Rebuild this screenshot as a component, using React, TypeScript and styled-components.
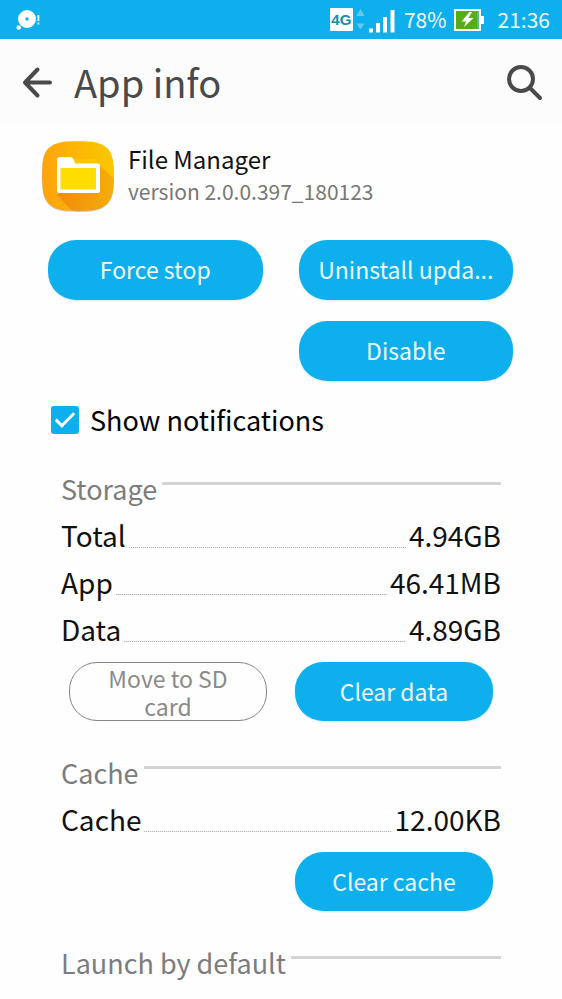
import React from "react";
import styled, { createGlobalStyle } from "styled-components";

const GlobalStyle = createGlobalStyle`
  *, *::before, *::after { box-sizing: border-box; }
  body {
    margin: 0;
    background: #fefefe;
    color: #111;
    font-family: "Noto Sans CJK SC", "Noto Sans", sans-serif;
    font-size: 27px;
  }
  button, input { font: inherit; }
`;

const Page = styled.div`
  min-height: 100vh;
`;

const StatusBar = styled.div`
  display: flex;
  align-items: center;
  justify-content: space-between;
  height: 39px;
  padding: 0 12px 0 16px;
  background: #0dafed;
  color: #f2fbff;
  font-size: 21px;
  line-height: 39px;
`;

const StatusGroup = styled.div`
  display: flex;
  align-items: center;
`;

const Charge = styled.span`
  display: flex;
  align-items: center;
  gap: 7px;
  margin-right: 14px;
`;

const AppBar = styled.header`
  display: flex;
  align-items: center;
  height: 85px;
  padding: 0 18px 0 20px;
  background: #fcfcfc;
  color: #4a4a4a;
`;

const IconButton = styled.button`
  display: flex;
  padding: 0;
  border: 0;
  background: none;
  color: inherit;
`;

const Title = styled.h1`
  flex: 1;
  margin: 0 0 0 20px;
  font-size: 38px;
  font-weight: 400;
  line-height: 60px;
`;

const Main = styled.main`
  padding: 16px 49px 0 48px;
`;

const AppSummary = styled.div`
  display: flex;
  align-items: center;
  gap: 12px;
  height: 74px;
  margin: 0 0 26px -8px;
`;

const AppText = styled.div`
  padding-bottom: 4px;
`;

const AppName = styled.h2`
  margin: 0;
  font-size: 24px;
  font-weight: 400;
  line-height: 32px;
`;

const Version = styled.p`
  margin: 0;
  color: #777;
  font-size: 21px;
  line-height: 32px;
`;

const ButtonGrid = styled.div<{ $inner?: boolean }>`
  display: grid;
  grid-template-columns: 1fr 1fr;
  gap: ${(p) => (p.$inner ? "28px" : "21px 36px")};
  padding: ${(p) => (p.$inner ? "7px 8px 0" : "0")};
`;

const PillButton = styled.button<{ $end?: boolean; $compact?: boolean }>`
  grid-column: ${(p) => (p.$end ? 2 : "auto")};
  min-height: ${(p) => (p.$compact ? 59 : 60)}px;
  min-width: 0;
  padding: 0 16px 2px;
  border: 0;
  border-radius: 28px;
  background: #0dafed;
  box-shadow: 0 1px 2px #0dafed33;
  color: #f2fbff;
  font-size: 23px;
  line-height: 28px;
  white-space: nowrap;

  &:disabled {
    padding: 0 32px;
    border: 1px solid #858585;
    background: none;
    box-shadow: none;
    color: #8a8a8a;
    white-space: normal;
  }
`;

const CheckLabel = styled.label`
  display: flex;
  align-items: center;
  gap: 11px;
  height: 46px;
  margin: 16px 0 24px 3px;
  color: #000;
`;

const CheckText = styled.span`
  padding-bottom: 1px;
`;

const CheckBox = styled.input`
  width: 28px;
  height: 28px;
  margin: 0;
  appearance: none;
  border: 2px solid #0dafed;
  border-radius: 3px;
  display: grid;
  place-items: center;

  &:checked { background: #0dafed; }

  &:checked::after {
    content: "";
    width: 10px;
    height: 19px;
    margin-bottom: 6px;
    border: solid #fff;
    border-width: 0 3px 3px 0;
    rotate: 45deg;
  }
`;

const Section = styled.section`
  margin: 0 12px 30px 13px;

  &:last-child { margin-bottom: 0; }
`;

const SectionTitle = styled.h3`
  display: flex;
  align-items: center;
  gap: 5px;
  height: 47px;
  margin: 0;
  padding-bottom: 4px;
  color: #7c7c7c;
  font-size: 27px;
  font-weight: 400;
  line-height: 40px;

  &::after {
    content: "";
    flex: 1;
    height: 3px;
    margin-bottom: 10px;
    background: #d3d3d3;
  }
`;

const Facts = styled.dl`
  margin: 0;
  font-size: 28px;
  line-height: 40px;
`;

const Fact = styled.div`
  display: flex;
  align-items: center;
  gap: 3px;
  height: 47px;
  padding-bottom: 6px;
`;

const Term = styled.dt``;

const Value = styled.dd`
  margin: 0;
`;

const Leader = styled.dd`
  flex: 1;
  height: 1px;
  margin: 25px 0 0;
  background: repeating-linear-gradient(90deg, #b5b5b5 0 1px, #e6e6e6 1px 2px);
`;

function DiscAlertIcon() {
  return (
    <svg width="26" height="24" viewBox="0 0 26 24" fill="#fff" aria-hidden="true">
      <path fillRule="evenodd" d="M11 2a9 9 0 1 1 0 18 9 9 0 0 1 0-18Zm0 7.300a1.700 1.700 0 1 0 0 3.400 1.700 1.700 0 0 0 0-3.400Z" />
      <circle cx="2.700" cy="19.500" r="2.200" />
      <path d="M21.500 7h1.800v6h-1.800zM21.500 14.500h1.800v2h-1.800z" />
    </svg>
  );
}

const NetworkBadge = styled.span`
  width: 23px;
  height: 23px;
  border-radius: 1px;
  background: #fff;
  color: #178cab;
  font-family: "Liberation Sans", sans-serif;
  font-size: 15px;
  font-weight: 700;
  line-height: 23px;
  text-align: center;
`;

function SignalIcon() {
  return (
    <svg width="51" height="26" viewBox="0 0 51 26" aria-hidden="true">
      <path d="m7.500 2 4 7h-8zM7.500 22.500l4-6h-8z" fill="#65c9ee" />
      <path d="M16 21.500h4v4h-4zM23 16h4v9.500h-4zM30 10h4v15.500h-4zM37.500 3h4v22.500h-4z" fill="#fff" />
    </svg>
  );
}

function BatteryIcon() {
  return (
    <svg width="30" height="22" viewBox="0 0 30 22" aria-hidden="true">
      <path d="M27 7h3v8h-3z" fill="#fff" />
      <rect x="1" y="1" width="25" height="20" fill="#55ae17" stroke="#fff" strokeWidth="2" />
      <path d="M23 2h2v18h-2z" fill="#4fb9a8" />
      <path d="M15.500 3 7.500 12.500h4.500L10 18l9.500-9h-5L18 3Z" fill="#fff" />
    </svg>
  );
}

function BackIcon() {
  return (
    <svg width="34" height="34" viewBox="0 0 34 34" fill="none" stroke="currentColor" strokeWidth="4" strokeLinecap="round" strokeLinejoin="round" aria-hidden="true">
      <path d="M17.500 4.500 5 17.500l12.500 13M5.500 17.500H30" />
    </svg>
  );
}

function SearchIcon() {
  return (
    <svg width="40" height="40" viewBox="0 0 40 40" fill="none" stroke="currentColor" strokeWidth="4" strokeLinecap="round" aria-hidden="true">
      <circle cx="17" cy="17" r="12" />
      <path d="m26 26 10 10" />
    </svg>
  );
}

function FolderIcon() {
  return (
    <svg width="76" height="76" viewBox="0 0 76 76" aria-hidden="true">
      <defs>
        <linearGradient id="tile" x1="0" x2="1" y1=".4" y2=".3">
          <stop offset="0" stopColor="#ffa20d" />
          <stop offset="1" stopColor="#f9c900" />
        </linearGradient>
        <linearGradient id="shade" x1="0" x2="1" y1="0" y2="0">
          <stop offset="0" stopColor="#f28a0a" />
          <stop offset="1" stopColor="#f3b40a" />
        </linearGradient>
        <clipPath id="tileShape">
          <path d="M27 2.500C32 2 44 2 49 2.500 66 4 73 11 73.500 27c.500 6 .500 13 0 19-.500 16-7.500 24-24.500 25.500-6 .500-16 .500-22 0C10 70 3 62 2.500 46c-.500-6-.500-13 0-19C3 11 10 4 27 2.500Z" />
        </clipPath>
      </defs>
      <path d="M27 4C32 3.500 44 3.500 49 4 66 5.500 73 12 73.500 28c.500 6 .500 13 0 19-.500 16-7.500 24-24.500 25.500-6 .500-16 .500-22 0C10 71 3 63 2.500 47c-.500-6-.500-13 0-19C3 12 10 5.500 27 4Z" fill="#b9a58c" opacity=".7" />
      <g clipPath="url(#tileShape)">
        <path d="M0 0h76v76H0z" fill="url(#tile)" />
        <path d="m60 27 24 22v35H44L17 56Z" fill="url(#shade)" />
      </g>
      <path d="M34 20h23v8H34z" fill="#ffc400" />
      <path d="M17 21q0-3 3-3h10q3 0 4 3l1 3.500h23q2 0 2 2V52q0 2-2 2H19q-2 0-2-2Z" fill="#fff" />
      <path d="M20.500 29H56v21.500H20.500z" fill="#fd0" />
    </svg>
  );
}

function FactList({ items }: { items: [string, string][] }) {
  return (
    <Facts>
      {items.map(([name, value]) => (
        <Fact key={name}>
          <Term>{name}</Term>
          <Leader aria-hidden="true" />
          <Value>{value}</Value>
        </Fact>
      ))}
    </Facts>
  );
}

export default function App() {
  return (
    <Page>
      <GlobalStyle />
      <StatusBar>
        <DiscAlertIcon />
        <StatusGroup>
          <NetworkBadge>4G</NetworkBadge>
          <SignalIcon />
          <Charge>78%<BatteryIcon /></Charge>
          <span>21:36</span>
        </StatusGroup>
      </StatusBar>
      <AppBar>
        <IconButton type="button" aria-label="Back"><BackIcon /></IconButton>
        <Title>App info</Title>
        <IconButton type="button" aria-label="Search"><SearchIcon /></IconButton>
      </AppBar>
      <Main>
        <AppSummary>
          <FolderIcon />
          <AppText>
            <AppName>File Manager</AppName>
            <Version>version 2.0.0.397_180123</Version>
          </AppText>
        </AppSummary>
        <ButtonGrid>
          <PillButton type="button">Force stop</PillButton>
          <PillButton type="button">Uninstall upda...</PillButton>
          <PillButton type="button" $end>Disable</PillButton>
        </ButtonGrid>
        <CheckLabel>
          <CheckBox type="checkbox" defaultChecked />
          <CheckText>Show notifications</CheckText>
        </CheckLabel>
        <Section>
          <SectionTitle>Storage</SectionTitle>
          <FactList items={[["Total", "4.94GB"], ["App", "46.41MB"], ["Data", "4.89GB"]]} />
          <ButtonGrid $inner>
            <PillButton type="button" $compact disabled>Move to SD card</PillButton>
            <PillButton type="button" $compact>Clear data</PillButton>
          </ButtonGrid>
        </Section>
        <Section>
          <SectionTitle>Cache</SectionTitle>
          <FactList items={[["Cache", "12.00KB"]]} />
          <ButtonGrid $inner>
            <PillButton type="button" $end $compact>Clear cache</PillButton>
          </ButtonGrid>
        </Section>
        <Section>
          <SectionTitle>Launch by default</SectionTitle>
        </Section>
      </Main>
    </Page>
  );
}
